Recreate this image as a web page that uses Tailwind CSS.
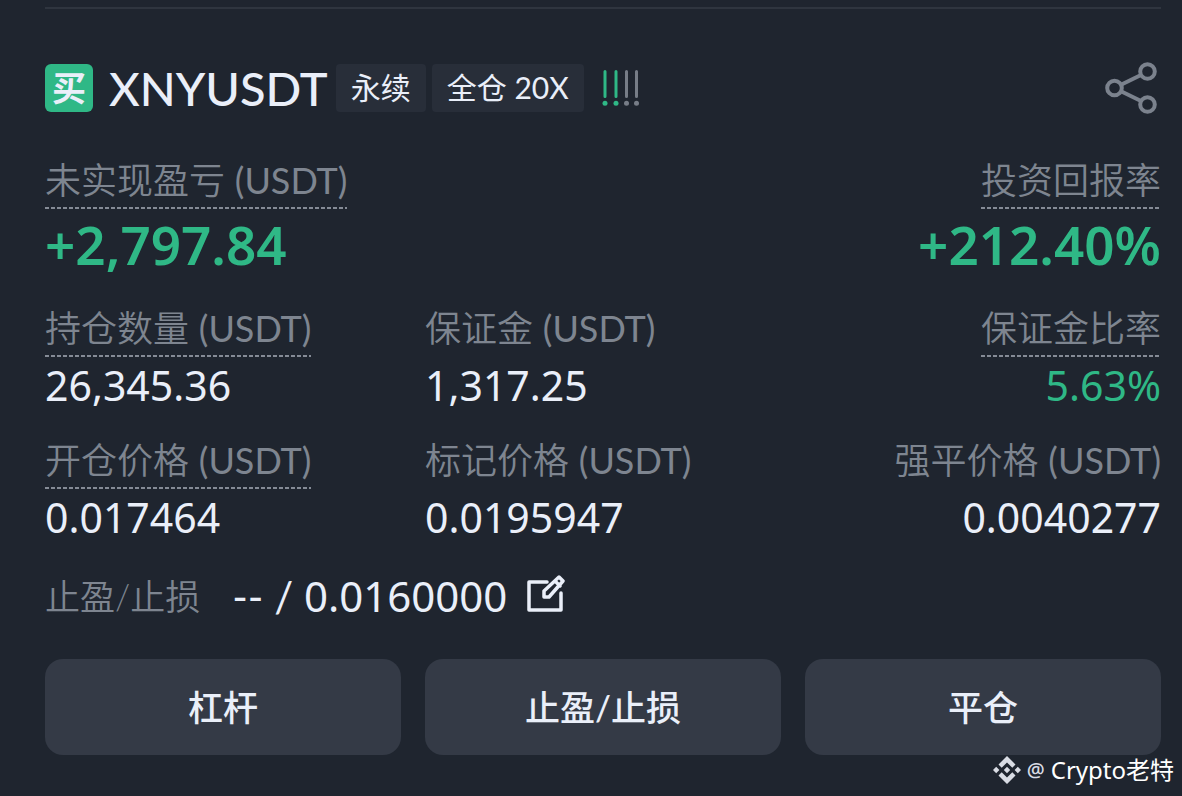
<!DOCTYPE html>
<html lang="zh-CN">
<head>
<meta charset="utf-8">
<meta name="viewport" content="width=device-width, initial-scale=1">
<title>XNYUSDT</title>
<script src="https://cdn.jsdelivr.net/npm/@tailwindcss/browser@4"></script>
</head>
<body class="min-h-screen bg-[#1f252f] font-['Noto_Sans','Noto_Sans_CJK_SC',sans-serif] text-[#eaeff9]">
<main class="pt-[7px] pl-[45px] pr-[21px]">
  <hr class="h-0.5 border-0 bg-[#2f353f]">

  <header class="mt-[55px] flex h-12 items-center font-['Lato','Noto_Sans_CJK_SC',sans-serif]">
    <span class="flex size-12 items-center justify-center rounded-md bg-[#2fb886] text-[34px] leading-[46px] font-bold">买</span>
    <h1 class="ml-4 text-[47px] leading-[50px] font-medium">XNYUSDT</h1>
    <span class="ml-2 flex h-12 items-center rounded-sm bg-[#282e39] px-[15px] pb-0.5 text-[30px] leading-[46px] whitespace-nowrap">永续</span>
    <span class="ml-1.5 flex h-12 items-center rounded-sm bg-[#282e39] px-[15px] pb-0.5 text-[30px] leading-[46px] whitespace-nowrap">全仓 20X</span>
    <svg class="ml-[18px] h-9 w-[38px]" viewBox="0 0 38 36" fill="none" stroke-width="3" stroke-linecap="round" aria-hidden="true">
      <path stroke="#2fb886" d="M3 1.500v25M14 1.500v25"/>
      <path stroke="#777d87" d="M24.500 1.500v25M34.500 1.500v25"/>
      <g fill="#2fb886"><circle cx="3" cy="33.300" r="2.500"/><circle cx="14" cy="33.300" r="2.500"/></g>
      <g fill="#777d87"><circle cx="24.500" cy="33.300" r="2.500"/><circle cx="34.500" cy="33.300" r="2.500"/></g>
    </svg>
    <button type="button" aria-label="分享" class="ml-auto mr-[3px]">
      <svg class="h-[52px] w-[54px]" viewBox="0 0 54 52" fill="none" stroke="#7b828d" stroke-width="4">
        <circle cx="10.500" cy="26" r="7.300"/><circle cx="43.500" cy="9.500" r="7.300"/><circle cx="43.500" cy="42.500" r="7.300"/>
        <path d="M17.500 22.500 37 13M17.500 29.500 37 39"/>
      </svg>
    </button>
  </header>

  <dl class="mt-[45px] flex justify-between">
    <div>
      <dt class="w-fit bg-[linear-gradient(90deg,#858b96_60%,transparent_60%)] bg-[length:6px_2px] bg-bottom-left bg-repeat-x pb-1.5 font-['Lato','Noto_Sans_CJK_SC',sans-serif] text-[36px] leading-[46px] font-[350] text-[#7e8590]">未实现盈亏 <span class="font-normal">(USDT)</span></dt>
      <dd class="mt-1 mb-px text-[53px] leading-[64px] font-semibold text-[#2fb886]">+2,797.84</dd>
    </div>
    <div class="flex flex-col items-end">
      <dt class="w-fit bg-[linear-gradient(90deg,#858b96_60%,transparent_60%)] bg-[length:6px_2px] bg-bottom-left bg-repeat-x pb-1.5 font-['Lato','Noto_Sans_CJK_SC',sans-serif] text-[36px] leading-[46px] font-[350] text-[#7e8590]">投资回报率</dt>
      <dd class="mt-1 mb-px text-[53px] leading-[64px] font-semibold text-[#2fb886]">+212.40%</dd>
    </div>
  </dl>

  <dl class="mt-[27px] grid grid-cols-3 gap-x-6 gap-y-[27px] whitespace-nowrap">
    <div>
      <dt class="w-fit bg-[linear-gradient(90deg,#858b96_60%,transparent_60%)] bg-[length:6px_2px] bg-bottom-left bg-repeat-x pb-1.5 font-['Lato','Noto_Sans_CJK_SC',sans-serif] text-[36px] leading-[46px] font-[350] text-[#7e8590]">持仓数量 <span class="font-normal">(USDT)</span></dt>
      <dd class="mt-1 mb-px text-[41px] leading-[48px]">26,345.36</dd>
    </div>
    <div>
      <dt class="pb-1.5 font-['Lato','Noto_Sans_CJK_SC',sans-serif] text-[36px] leading-[46px] font-[350] text-[#7e8590]">保证金 <span class="font-normal">(USDT)</span></dt>
      <dd class="mt-1 mb-px text-[41px] leading-[48px]">1,317.25</dd>
    </div>
    <div class="flex flex-col items-end">
      <dt class="w-fit bg-[linear-gradient(90deg,#858b96_60%,transparent_60%)] bg-[length:6px_2px] bg-bottom-left bg-repeat-x pb-1.5 font-['Lato','Noto_Sans_CJK_SC',sans-serif] text-[36px] leading-[46px] font-[350] text-[#7e8590]">保证金比率</dt>
      <dd class="mt-1 mb-px text-[41px] leading-[48px] text-[#2fb886]">5.63%</dd>
    </div>
    <div>
      <dt class="w-fit bg-[linear-gradient(90deg,#858b96_60%,transparent_60%)] bg-[length:6px_2px] bg-bottom-left bg-repeat-x pb-1.5 font-['Lato','Noto_Sans_CJK_SC',sans-serif] text-[36px] leading-[46px] font-[350] text-[#7e8590]">开仓价格 <span class="font-normal">(USDT)</span></dt>
      <dd class="mt-1 mb-px text-[41px] leading-[48px]">0.017464</dd>
    </div>
    <div>
      <dt class="pb-1.5 font-['Lato','Noto_Sans_CJK_SC',sans-serif] text-[36px] leading-[46px] font-[350] text-[#7e8590]">标记价格 <span class="font-normal">(USDT)</span></dt>
      <dd class="mt-1 mb-px text-[41px] leading-[48px]">0.0195947</dd>
    </div>
    <div class="flex flex-col items-end">
      <dt class="pb-1.5 font-['Lato','Noto_Sans_CJK_SC',sans-serif] text-[36px] leading-[46px] font-[350] text-[#7e8590]">强平价格 <span class="font-normal">(USDT)</span></dt>
      <dd class="mt-1 mb-px text-[41px] leading-[48px]">0.0040277</dd>
    </div>
  </dl>

  <div class="mt-[30px] flex h-12 items-center">
    <span class="font-['Lato','Noto_Sans_CJK_SC',sans-serif] text-[35px] leading-[46px] font-[350] text-[#7e8590]">止盈/止损</span>
    <span class="ml-8 font-['Lato','Noto_Sans',sans-serif] text-[42px] leading-[48px]">-- / <span class="font-['Noto_Sans',sans-serif]">0.0160000</span></span>
    <button type="button" aria-label="编辑止盈/止损" class="ml-[18px]">
      <svg class="h-12 w-10" viewBox="0 0 40 48" fill="none" stroke="#eaeff9" stroke-width="3.500" stroke-linejoin="round" stroke-linecap="round">
        <path d="M22 10H4v28h32V21"/>
        <path d="M19 25v-6L34 5l4 4L24 25zM30 9l5 5"/>
      </svg>
    </button>
  </div>

  <div class="mt-[39px] grid grid-cols-3 gap-6 font-['Lato','Noto_Sans_CJK_SC',sans-serif]">
    <button type="button" class="h-24 rounded-[18px] bg-[#343a46] text-[35px] leading-[48px] font-medium">杠杆</button>
    <button type="button" class="h-24 rounded-[18px] bg-[#343a46] text-[35px] leading-[48px] font-medium">止盈/止损</button>
    <button type="button" class="h-24 rounded-[18px] bg-[#343a46] text-[35px] leading-[48px] font-medium">平仓</button>
  </div>
</main>
<footer class="flex h-[30px] items-center justify-end pr-2 text-2xl leading-[30px] text-white">
  <svg class="size-7" viewBox="0 0 28 28" fill="#d9dce4" aria-hidden="true">
    <path d="M14 0l8.500 8.500-3.200 3.200L14 6.400 8.700 11.700 5.500 8.500zM14 28l8.500-8.500-3.200-3.200L14 21.600 8.700 16.300 5.500 19.500zM14 10.800l3.200 3.200-3.200 3.200-3.200-3.200zM3.200 10.800 6.400 14 3.200 17.200 0 14zM24.800 10.800 28 14l-3.200 3.200-3.200-3.200z"/>
  </svg>
  <span class="ml-1.5 text-xl leading-[30px] font-medium text-[#d9dce4]">@</span>
  <span class="ml-1.5">Crypto老特</span>
</footer>
</body>
</html>
